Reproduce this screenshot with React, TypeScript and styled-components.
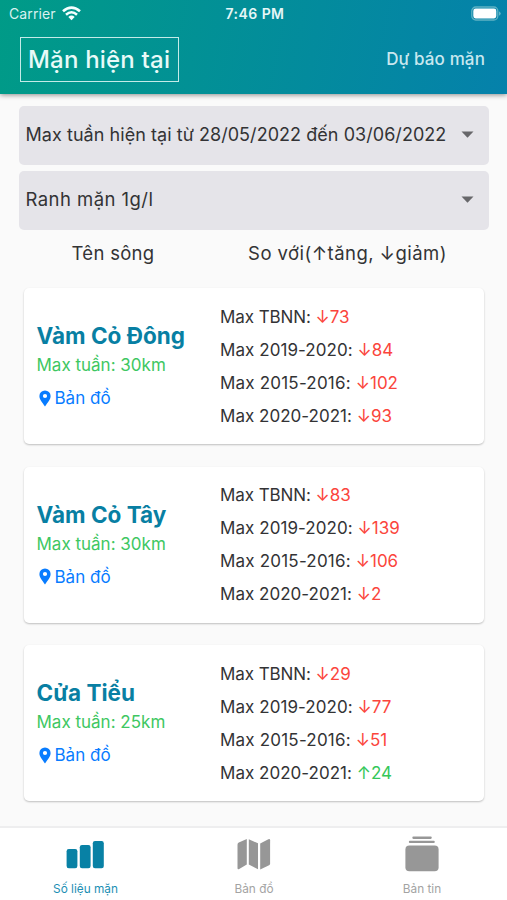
import React from "react";
import styled, { createGlobalStyle } from "styled-components";

const Global = createGlobalStyle`
  * { box-sizing: border-box; }
  body { margin: 0; background: #fafafa; font-family: Inter, "Noto Sans", sans-serif; color: #333335; }
`;

const Screen = styled.div`
  width: 507px;
  height: 900px;
  display: flex;
  flex-direction: column;
  background: #fafafa;
  overflow: hidden;
  white-space: nowrap;
`;

const Header = styled.header`
  height: 94px;
  flex: none;
  color: #fff;
  background: linear-gradient(102deg, #009b87, #0581ab);
  box-shadow: 0 1px 5px rgba(0, 0, 0, 0.45);
`;

const StatusBar = styled.div`
  height: 27px;
  display: grid;
  grid-template-columns: 1fr auto 1fr;
  align-items: center;
  padding: 0 6px 0 9px;
  font-size: 14px;
`;

const Carrier = styled.div`
  display: flex;
  align-items: center;
  gap: 6px;
  color: #d9f1f0;
  letter-spacing: 0.1px;
`;

const Clock = styled.div`
  font-weight: 600;
  font-size: 14px;
  letter-spacing: 0.45px;
  color: #e6f6f7;
`;

const BatteryBox = styled.div`
  display: flex;
  justify-content: flex-end;
`;

const HeaderTabs = styled.nav`
  display: flex;
  align-items: center;
  justify-content: space-between;
  padding: 10px 22px 0 20px;
`;

const ActiveTab = styled.div`
  width: 159px;
  height: 45px;
  border: 1.5px solid #c4ebe8;
  padding-left: 7px;
  line-height: 44px;
  font-size: 24px;
  font-weight: 500;
  letter-spacing: 0.2px;
  color: #e8faf8;
`;

const OtherTab = styled.div`
  font-size: 17px;
  font-weight: 500;
  letter-spacing: 0.12px;
  line-height: 20px;
  padding-bottom: 1px;
  color: #c9e8ef;
`;

const Filters = styled.section`
  display: flex;
  flex-direction: column;
  gap: 6px;
  padding: 12px 18px 0 19px;
`;

const Select = styled.div<{ $size: number; $tracking: number }>`
  height: 59px;
  border-radius: 5px;
  background: #e5e4e9;
  display: flex;
  align-items: center;
  justify-content: space-between;
  padding: 0 15px 3px 6.5px;
  font-size: ${(p) => p.$size}px;
  letter-spacing: ${(p) => p.$tracking}px;
`;

const ColumnHeads = styled.div`
  display: grid;
  grid-template-columns: 226px 1fr;
  height: 48px;
  flex: none;
  line-height: 46px;
  font-size: 18.5px;
  text-align: center;
`;

const RiverHead = styled.div`
  letter-spacing: 0.3px;
`;

const CompareHead = styled.div`
  padding-right: 38px;
  letter-spacing: 0.45px;
`;

const Cards = styled.main`
  flex: 1;
  display: flex;
  flex-direction: column;
  gap: 22.5px;
  padding: 10px 23px 0 24px;
`;

const Card = styled.article`
  height: 156px;
  flex: none;
  border-radius: 5px;
  background: #fff;
  box-shadow: 0 1px 2px rgba(0, 0, 0, 0.24);
  display: grid;
  grid-template-columns: 196px 1fr;
`;

const River = styled.div`
  padding: 32px 0 0 12.5px;
`;

const RiverName = styled.h2`
  margin: 0;
  color: #087fa3;
  font-size: 22.5px;
  line-height: 32px;
  font-weight: 650;
`;

const WeekMax = styled.div`
  color: #3ec762;
  font-size: 17px;
  line-height: 26px;
`;

const MapLink = styled.div`
  display: flex;
  align-items: center;
  gap: 4px;
  margin-top: 7px;
  padding-left: 2px;
  color: #087cff;
  font-size: 17px;
  line-height: 26px;
`;

const Stats = styled.div`
  padding-top: 12.5px;
  font-size: 17px;
  line-height: 33px;
`;

const StatLabel = styled.span<{ $tracking: number }>`
  letter-spacing: ${(p) => p.$tracking}px;
`;

const Change = styled.span<{ $up: boolean }>`
  color: ${(p) => (p.$up ? "#34c759" : "#fb453c")};
`;

const BottomBar = styled.nav`
  height: 74px;
  flex: none;
  display: grid;
  grid-template-columns: 171px 166px 170px;
  background: #fff;
  border-top: 2px solid #eeeeef;
`;

const BottomTab = styled.div<{ $active?: boolean }>`
  display: flex;
  flex-direction: column;
  align-items: center;
  padding-top: 7px;
  font-size: 11.8px;
  line-height: 16px;
  color: ${(p) => (p.$active ? "#1c8fb4" : "#a3a3a3")};
`;

const TabLabel = styled.span`
  margin-top: 6px;
`;

const Wifi = () => (
  <svg width="19" height="15" viewBox="0 0 19 15">
    <g fill="none" stroke="#f4ffff" strokeWidth="2.6">
      <path d="M1 5.3Q9.5-2.2 18 5.3" />
      <path d="M4 8.7Q9.5 3.8 15 8.7" />
    </g>
    <path d="M6.3 10.9Q9.5 8.1 12.7 10.9L9.5 14.2Z" fill="#f4ffff" />
  </svg>
);

const Battery = () => (
  <svg width="30" height="15" viewBox="0 0 30 15">
    <rect x="0.8" y="1" width="26" height="13" rx="4" fill="none" stroke="#5fb2c4" strokeWidth="1.3" />
    <rect x="2.3" y="2.6" width="23" height="9.8" rx="2.3" fill="#fff" />
    <path d="M28.2 5.2Q31 7.5 28.2 9.8Z" fill="#77c2d0" />
  </svg>
);

const Caret = () => (
  <svg width="13" height="7" viewBox="0 0 13 7">
    <path d="M0.5 0.5H12.5L6.5 6.7Z" fill="#67676a" />
  </svg>
);

const Pin = () => (
  <svg width="12" height="17" viewBox="0 0 12 17">
    <path
      d="M6 0.4A5.6 5.6 0 0 0 0.4 6C0.4 9.8 3.6 12.6 6 16.6C8.4 12.6 11.6 9.8 11.6 6A5.6 5.6 0 0 0 6 0.4ZM6 3.9A2.1 2.1 0 1 1 6 8.1A2.1 2.1 0 0 1 6 3.9Z"
      fill="#087cff"
      fillRule="evenodd"
    />
  </svg>
);

const Bars = () => (
  <svg width="39" height="40" viewBox="0 0 39 40">
    <g fill="#0881a5">
      <rect x="0.6" y="14" width="10.8" height="19.3" rx="2.2" />
      <rect x="13.8" y="10" width="10.8" height="23.3" rx="2.2" />
      <rect x="26.8" y="6" width="11" height="27.3" rx="2.2" />
    </g>
  </svg>
);

const MapIcon = () => (
  <svg width="34" height="40" viewBox="0 0 34 40">
    <g fill="#979797">
      <path d="M1.8 7.6L9.8 4.1V29.5L2.2 34Q0.5 34.8 0.5 33V9.8Q0.5 8.2 1.8 7.6Z" />
      <path d="M11.8 4.2L21 8.3V34.3L11.8 29.5Z" />
      <path d="M23.2 8.5L31.4 4.2Q33.1 3.5 33.1 5.3V28.5Q33.1 29.7 32.1 30.3L23.2 34.5Z" />
    </g>
  </svg>
);

const Albums = () => (
  <svg width="34" height="40" viewBox="0 0 34 40">
    <g fill="#979797">
      <rect x="7.3" y="1.6" width="19.5" height="2.3" rx="1.1" />
      <rect x="3.8" y="5.8" width="26" height="2.3" rx="1.1" />
      <rect x="0.4" y="10.5" width="33.2" height="25.8" rx="4" />
    </g>
  </svg>
);

type Stat = [string, number];

const labelTracking: Record<string, number> = {
  TBNN: -0.08,
  "2019-2020": 0.06,
  "2015-2016": 0.2,
  "2020-2021": 0.02,
};

const rivers: { name: string; week: string; stats: Stat[] }[] = [
  { name: "Vàm Cỏ Đông", week: "30km", stats: [["TBNN", -73], ["2019-2020", -84], ["2015-2016", -102], ["2020-2021", -93]] },
  { name: "Vàm Cỏ Tây", week: "30km", stats: [["TBNN", -83], ["2019-2020", -139], ["2015-2016", -106], ["2020-2021", -2]] },
  { name: "Cửa Tiểu", week: "25km", stats: [["TBNN", -29], ["2019-2020", -77], ["2015-2016", -51], ["2020-2021", 24]] },
];

export default function App() {
  return (
    <Screen>
      <Global />
      <Header>
        <StatusBar>
          <Carrier>Carrier <Wifi /></Carrier>
          <Clock>7:46 PM</Clock>
          <BatteryBox><Battery /></BatteryBox>
        </StatusBar>
        <HeaderTabs>
          <ActiveTab>Mặn hiện tại</ActiveTab>
          <OtherTab>Dự báo mặn</OtherTab>
        </HeaderTabs>
      </Header>
      <Filters>
        <Select $size={18} $tracking={0.05}>Max tuần hiện tại từ 28/05/2022 đến 03/06/2022<Caret /></Select>
        <Select $size={18.5} $tracking={0.45}>Ranh mặn 1g/l<Caret /></Select>
      </Filters>
      <ColumnHeads>
        <RiverHead>Tên sông</RiverHead>
        <CompareHead>So với(↑tăng, ↓giảm)</CompareHead>
      </ColumnHeads>
      <Cards>
        {rivers.map((r) => (
          <Card key={r.name}>
            <River>
              <RiverName>{r.name}</RiverName>
              <WeekMax>Max tuần: {r.week}</WeekMax>
              <MapLink><Pin />Bản đồ</MapLink>
            </River>
            <Stats>
              {r.stats.map(([label, value]) => (
                <div key={label}>
                  <StatLabel $tracking={labelTracking[label]}>Max {label}: </StatLabel>
                  <Change $up={value > 0}>{value > 0 ? "↑" : "↓"}{Math.abs(value)}</Change>
                </div>
              ))}
            </Stats>
          </Card>
        ))}
      </Cards>
      <BottomBar>
        <BottomTab $active><Bars /><TabLabel>Số liệu mặn</TabLabel></BottomTab>
        <BottomTab><MapIcon /><TabLabel>Bản đồ</TabLabel></BottomTab>
        <BottomTab><Albums /><TabLabel>Bản tin</TabLabel></BottomTab>
      </BottomBar>
    </Screen>
  );
}
